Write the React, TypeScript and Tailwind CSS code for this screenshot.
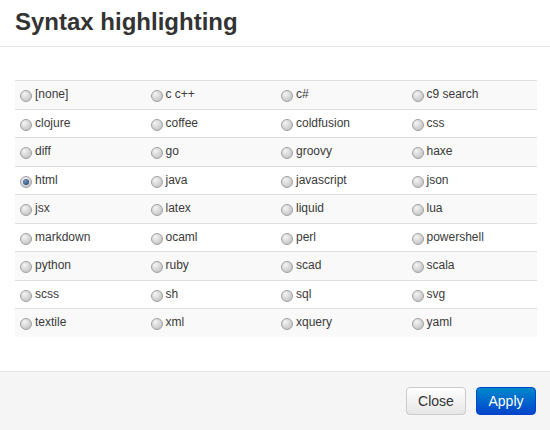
const modes = [
  "[none]", "c c++", "c#", "c9 search",
  "clojure", "coffee", "coldfusion", "css",
  "diff", "go", "groovy", "haxe",
  "html", "java", "javascript", "json",
  "jsx", "latex", "liquid", "lua",
  "markdown", "ocaml", "perl", "powershell",
  "python", "ruby", "scad", "scala",
  "scss", "sh", "sql", "svg",
  "textile", "xml", "xquery", "yaml",
];

function Radio({ checked }: { checked: boolean }) {
  return (
    <span className="relative mt-[3px] inline-block h-[12px] w-[12px] shrink-0 rounded-full border border-[#a0a0a0] bg-[radial-gradient(circle_at_35%_30%,#f4f4f4,#c8c8c8_75%)]">
      {checked && (
        <span className="absolute left-[2px] top-[2px] h-[6px] w-[6px] rounded-full bg-[radial-gradient(circle_at_40%_35%,#7095be,#1f3a60)]" />
      )}
    </span>
  );
}

export default function App() {
  const rows: string[][] = [];
  for (let i = 0; i < modes.length; i += 4) rows.push(modes.slice(i, i + 4));

  return (
    <div className="flex h-[430px] w-[550px] flex-col bg-white font-['Liberation_Sans',Arial,sans-serif] text-[#333]">
      <div className="h-[47px] border-b border-[#e5e5e5] px-[15px] pt-[8px]">
        <h3 className="text-[24px] font-bold leading-[28px] text-[#333]">Syntax highlighting</h3>
      </div>
      <div className="flex-1 px-[15px] pt-[33px]">
        <div className="w-[522px]">
          {rows.map((row, r) => (
            <div
              key={r}
              className={`grid h-[28.5px] grid-cols-4 border-t border-[#ddd] ${r % 2 === 0 ? "bg-[#f9f9f9]" : "bg-white"}`}
            >
              {row.map((m) => (
                <label key={m} className="flex items-start gap-[3px] pl-[5px] pt-[6px] text-[12px] leading-[14px] text-[#3a3a3a]">
                  <Radio checked={m === "html"} />
                  <span>{m}</span>
                </label>
              ))}
            </div>
          ))}
        </div>
      </div>
      <div className="flex h-[59px] justify-end gap-[10px] border-t border-[#e5e5e5] bg-[#f5f5f5] px-[14px] pt-[15px]">
        <button className="h-[28px] w-[60px] rounded-[4px] border border-[#ccc] bg-[linear-gradient(#fff,#e6e6e6)] text-[14px] text-[#333]">
          Close
        </button>
        <button className="h-[28px] w-[60px] rounded-[4px] border border-[#0044cc] bg-[linear-gradient(#0088cc,#0044cc)] text-[14px] text-white">
          Apply
        </button>
      </div>
    </div>
  );
}
